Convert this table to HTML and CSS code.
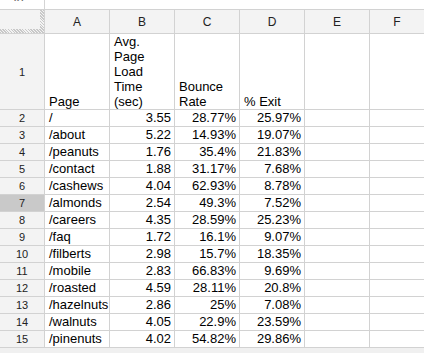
FILE: index.html
```html
<!DOCTYPE html>
<html>
<head>
<meta charset="utf-8">
<link rel="stylesheet" href="styles.css">
</head>
<body>
<div class="fbar"><span class="fx">fx</span><span class="fsep"></span></div>
<div class="sheet">
  <div class="corner"></div>
  <div class="colh">A</div><div class="colh">B</div><div class="colh">C</div><div class="colh">D</div><div class="colh">E</div><div class="colh">F</div>

  <div class="rowh">1</div>
  <div class="c head">Page</div>
  <div class="c head">Avg.<br>Page<br>Load<br>Time<br>(sec)</div>
  <div class="c head">Bounce<br>Rate</div>
  <div class="c head">% Exit</div>
  <div class="c"></div><div class="c"></div>

  <div class="rowh">2</div><div class="c">/</div><div class="c n">3.55</div><div class="c n">28.77%</div><div class="c n">25.97%</div><div class="c"></div><div class="c"></div>
  <div class="rowh">3</div><div class="c">/about</div><div class="c n">5.22</div><div class="c n">14.93%</div><div class="c n">19.07%</div><div class="c"></div><div class="c"></div>
  <div class="rowh">4</div><div class="c">/peanuts</div><div class="c n">1.76</div><div class="c n">35.4%</div><div class="c n">21.83%</div><div class="c"></div><div class="c"></div>
  <div class="rowh">5</div><div class="c">/contact</div><div class="c n">1.88</div><div class="c n">31.17%</div><div class="c n">7.68%</div><div class="c"></div><div class="c"></div>
  <div class="rowh">6</div><div class="c">/cashews</div><div class="c n">4.04</div><div class="c n">62.93%</div><div class="c n">8.78%</div><div class="c"></div><div class="c"></div>
  <div class="rowh sel">7</div><div class="c">/almonds</div><div class="c n">2.54</div><div class="c n">49.3%</div><div class="c n">7.52%</div><div class="c"></div><div class="c"></div>
  <div class="rowh">8</div><div class="c">/careers</div><div class="c n">4.35</div><div class="c n">28.59%</div><div class="c n">25.23%</div><div class="c"></div><div class="c"></div>
  <div class="rowh">9</div><div class="c">/faq</div><div class="c n">1.72</div><div class="c n">16.1%</div><div class="c n">9.07%</div><div class="c"></div><div class="c"></div>
  <div class="rowh">10</div><div class="c">/filberts</div><div class="c n">2.98</div><div class="c n">15.7%</div><div class="c n">18.35%</div><div class="c"></div><div class="c"></div>
  <div class="rowh">11</div><div class="c">/mobile</div><div class="c n">2.83</div><div class="c n">66.83%</div><div class="c n">9.69%</div><div class="c"></div><div class="c"></div>
  <div class="rowh">12</div><div class="c">/roasted</div><div class="c n">4.59</div><div class="c n">28.11%</div><div class="c n">20.8%</div><div class="c"></div><div class="c"></div>
  <div class="rowh">13</div><div class="c">/hazelnuts</div><div class="c n">2.86</div><div class="c n">25%</div><div class="c n">7.08%</div><div class="c"></div><div class="c"></div>
  <div class="rowh">14</div><div class="c">/walnuts</div><div class="c n">4.05</div><div class="c n">22.9%</div><div class="c n">23.59%</div><div class="c"></div><div class="c"></div>
  <div class="rowh">15</div><div class="c">/pinenuts</div><div class="c n">4.02</div><div class="c n">54.82%</div><div class="c n">29.86%</div><div class="c"></div><div class="c"></div>
</div>
<div class="foot"></div>
</body>
</html>
```

FILE: styles.css
```css
html, body {
  margin: 0;
  padding: 0;
  background: #fff;
  font-family: "Liberation Sans", Arial, sans-serif;
  overflow: hidden;
}

.fbar {
  height: 9px;
  display: flex;
  overflow: hidden;
  background: #fff;
}

.fx {
  width: 44px;
  box-sizing: border-box;
  padding-left: 14px;
  font-size: 13px;
  font-style: italic;
  line-height: 13px;
  margin-top: -10px;
  color: #666;
}

.fsep {
  width: 1px;
  background: #d4d4d4;
}

.sheet {
  display: grid;
  grid-template-columns: 44px 64px 64px 64px 64px 64px 1fr;
  grid-template-rows: 23px 75px repeat(14, 16px);
  gap: 1px;
  padding: 1px 0;
  background: #d2d2d2;
}

.corner {
  background-color: #f3f3f3;
  background-image:
    repeating-linear-gradient(45deg, #c8c8c8 0 1px, #f3f3f3 1px 2px),
    repeating-linear-gradient(45deg, #c8c8c8 0 1px, #f3f3f3 1px 2px);
  background-size: 4px 23px, 44px 4px;
  background-position: right top, left bottom;
  background-repeat: no-repeat;
}

.colh {
  background: #f3f3f3;
  font-size: 12px;
  color: #222;
  display: flex;
  align-items: center;
  justify-content: center;
}

.rowh {
  background: #f3f3f3;
  font-size: 11px;
  color: #222;
  display: flex;
  align-items: center;
  justify-content: center;
}

.rowh.sel {
  background: #c9c9c9;
}

.c {
  background: #fff;
  font-size: 13px;
  line-height: 16px;
  color: #000;
  padding: 0 3px 0 4px;
  white-space: nowrap;
  overflow: hidden;
}

.c.n {
  text-align: right;
}

.c.head {
  display: flex;
  align-items: flex-end;
  line-height: 15px;
}

.foot {
  height: 10px;
  background: #f0f0f0;
}
```
